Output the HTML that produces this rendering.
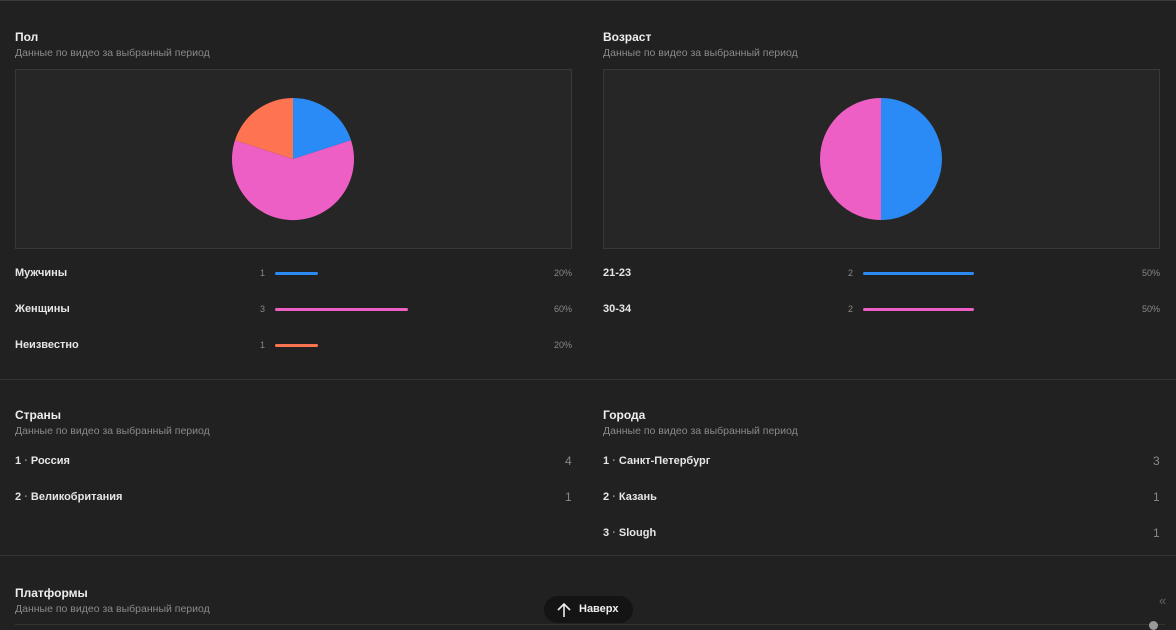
<!DOCTYPE html>
<html><head><meta charset="utf-8"><style>
body{margin:0;width:1176px;height:627px;background:#212121;overflow:hidden;font-family:"Liberation Sans",sans-serif;position:relative}
.a{position:absolute}
.t{font-size:12px;color:#eee;font-weight:bold}
.s{font-size:10.5px;color:#8a8a8a}
.box{position:absolute;width:557px;height:180px;top:69px;background:#262626;border:1px solid #383838;box-sizing:border-box}
.lab{font-size:11px;color:#e6e6e6;font-weight:bold;margin-top:1px}
.n{font-size:9px;color:#888}
.bar{position:absolute;height:3px;border-radius:2px}
.hr{position:absolute;left:0;width:1176px;height:1px;background:#343434}
.c{font-size:12px;color:#888}
</style></head><body>
<div class="hr" style="top:0;background:#3a3a3a"></div>
<div class="a t" style="left:15px;top:30px">Пол</div>
<div class="a s" style="left:15px;top:47px">Данные по видео за выбранный период</div>
<div class="box" style="left:15px"></div>
<div class="a t" style="left:603px;top:30px">Возраст</div>
<div class="a s" style="left:603px;top:47px">Данные по видео за выбранный период</div>
<div class="box" style="left:603px"></div>
<svg class="a" style="left:0;top:0" width="1176" height="260">
<path d="M293,159 L293,98 A61,61 0 0 1 351,140.2 Z" fill="#2a8af6"/>
<path d="M293,159 L351,140.2 A61,61 0 1 1 235,140.2 Z" fill="#ee5fc6"/>
<path d="M293,159 L235,140.2 A61,61 0 0 1 293,98 Z" fill="#fe7350"/>
<path d="M881,98 A61,61 0 0 1 881,220 Z" fill="#2a8af6"/>
<path d="M881,98 A61,61 0 0 0 881,220 Z" fill="#ee5fc6"/>
</svg>

<div class="a lab" style="left:15px;top:266px">Мужчины</div><div class="a n" style="left:260px;top:268px">1</div><div class="bar" style="left:275px;top:272px;width:43px;background:#2a8af6"></div><div class="a n" style="left:554px;top:268px">20%</div>
<div class="a lab" style="left:15px;top:302px">Женщины</div><div class="a n" style="left:260px;top:304px">3</div><div class="bar" style="left:275px;top:308px;width:133px;background:#ee5fc6"></div><div class="a n" style="left:554px;top:304px">60%</div>
<div class="a lab" style="left:15px;top:338px">Неизвестно</div><div class="a n" style="left:260px;top:340px">1</div><div class="bar" style="left:275px;top:344px;width:43px;background:#fe7350"></div><div class="a n" style="left:554px;top:340px">20%</div>

<div class="a lab" style="left:603px;top:266px">21-23</div><div class="a n" style="left:848px;top:268px">2</div><div class="bar" style="left:863px;top:272px;width:111px;background:#2a8af6"></div><div class="a n" style="left:1142px;top:268px">50%</div>
<div class="a lab" style="left:603px;top:302px">30-34</div><div class="a n" style="left:848px;top:304px">2</div><div class="bar" style="left:863px;top:308px;width:111px;background:#ee5fc6"></div><div class="a n" style="left:1142px;top:304px">50%</div>

<div class="hr" style="top:379px"></div>
<div class="a t" style="left:15px;top:408px">Страны</div>
<div class="a s" style="left:15px;top:425px">Данные по видео за выбранный период</div>
<div class="a lab" style="left:15px;top:454px">1 <span style="color:#888">·</span> Россия</div><div class="a c" style="left:565px;top:454px">4</div>
<div class="a lab" style="left:15px;top:490px">2 <span style="color:#888">·</span> Великобритания</div><div class="a c" style="left:565px;top:490px">1</div>
<div class="a t" style="left:603px;top:408px">Города</div>
<div class="a s" style="left:603px;top:425px">Данные по видео за выбранный период</div>
<div class="a lab" style="left:603px;top:454px">1 <span style="color:#888">·</span> Санкт-Петербург</div><div class="a c" style="left:1153px;top:454px">3</div>
<div class="a lab" style="left:603px;top:490px">2 <span style="color:#888">·</span> Казань</div><div class="a c" style="left:1153px;top:490px">1</div>
<div class="a lab" style="left:603px;top:526px">3 <span style="color:#888">·</span> Slough</div><div class="a c" style="left:1153px;top:526px">1</div>

<div class="hr" style="top:555px"></div>
<div class="a t" style="left:15px;top:586px">Платформы</div>
<div class="a s" style="left:15px;top:603px">Данные по видео за выбранный период</div>
<div class="hr" style="top:624px;left:15px;width:1150px;background:#343434"></div>
<div class="a" style="left:544px;top:596px;width:89px;height:27px;background:#141414;border-radius:14px"></div>
<svg class="a" style="left:556px;top:601px" width="16" height="18"><path d="M8,16 V3 M2,9 L8,3 L14,9" stroke="#eee" stroke-width="1.6" fill="none"/></svg>
<div class="a" style="left:579px;top:603px;font-size:11px;color:#eee;font-weight:bold">Наверх</div>
<div class="a" style="left:1159px;top:593px;font-size:13px;color:#666">«</div>
<div class="a" style="left:1149px;top:621px;width:9px;height:9px;border-radius:50%;background:#999"></div>
</body></html>
